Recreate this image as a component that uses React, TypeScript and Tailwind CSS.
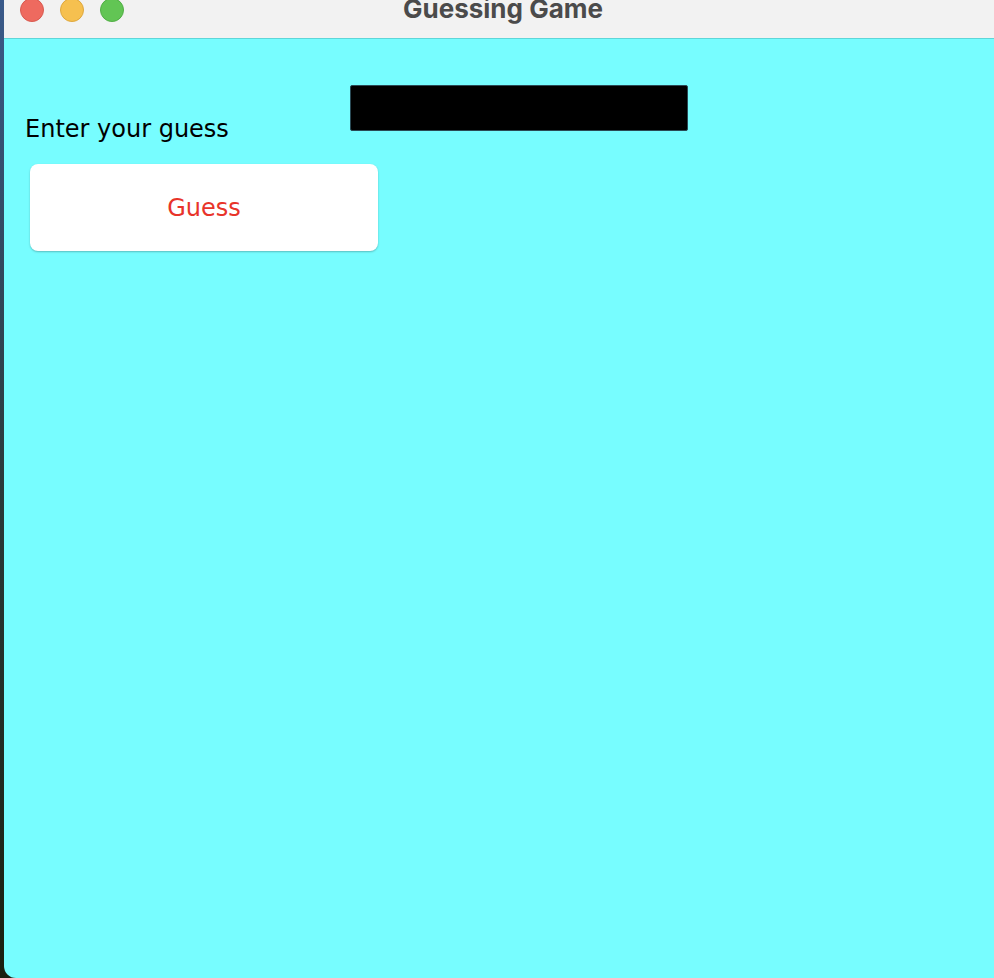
import React from 'react';

const App: React.FC = () => {
  return (
    <div className="w-[994px] h-[978px] flex overflow-hidden bg-gradient-to-b from-[#3a5a8a] via-[#2a3a3a] to-[#1a2010]">
      {/* desktop strip on the left */}
      <div className="w-[4px] shrink-0"></div>

      {/* window */}
      <div className="flex-1 flex flex-col rounded-bl-[12px] overflow-hidden">
        {/* title bar */}
        <div className="relative h-[39px] shrink-0 bg-[#f2f2f2] border-b border-[#5fd6d8]">
          <div className="absolute left-[16px] -top-[2px] flex gap-[16px]">
            <span className="w-[24px] h-[24px] rounded-full bg-[#ee6a5f] border border-[#d85a50]"></span>
            <span className="w-[24px] h-[24px] rounded-full bg-[#f6c04f] border border-[#dea83e]"></span>
            <span className="w-[24px] h-[24px] rounded-full bg-[#62c554] border border-[#52ae46]"></span>
          </div>
          <div
            className="absolute left-[399px] -top-[4px] text-[26px] leading-[26px] font-bold text-[#4b4b4b] whitespace-nowrap"
            style={{ fontFamily: 'Inter, "Liberation Sans", sans-serif' }}
          >
            Guessing Game
          </div>
        </div>

        {/* content */}
        <div
          className="flex-1 bg-[#77fdff] relative"
          style={{ fontFamily: '"DejaVu Sans", "Noto Sans", sans-serif' }}
        >
          <div className="absolute left-[346px] top-[46px] w-[338px] h-[46px] bg-black border border-[#2a4a55] rounded-[2px]"></div>

          <div className="pt-[75px] pl-[21px] text-[24px] leading-[30px] text-black">Enter your guess</div>

          <div className="pl-[26px] pt-[20px]">
            <button className="w-[348px] h-[87px] bg-white rounded-[8px] shadow-[0_1px_2px_rgba(0,0,0,0.25)] text-[24px] text-[#e8342a]">
              Guess
            </button>
          </div>
        </div>
      </div>
    </div>
  );
};

export default App;
